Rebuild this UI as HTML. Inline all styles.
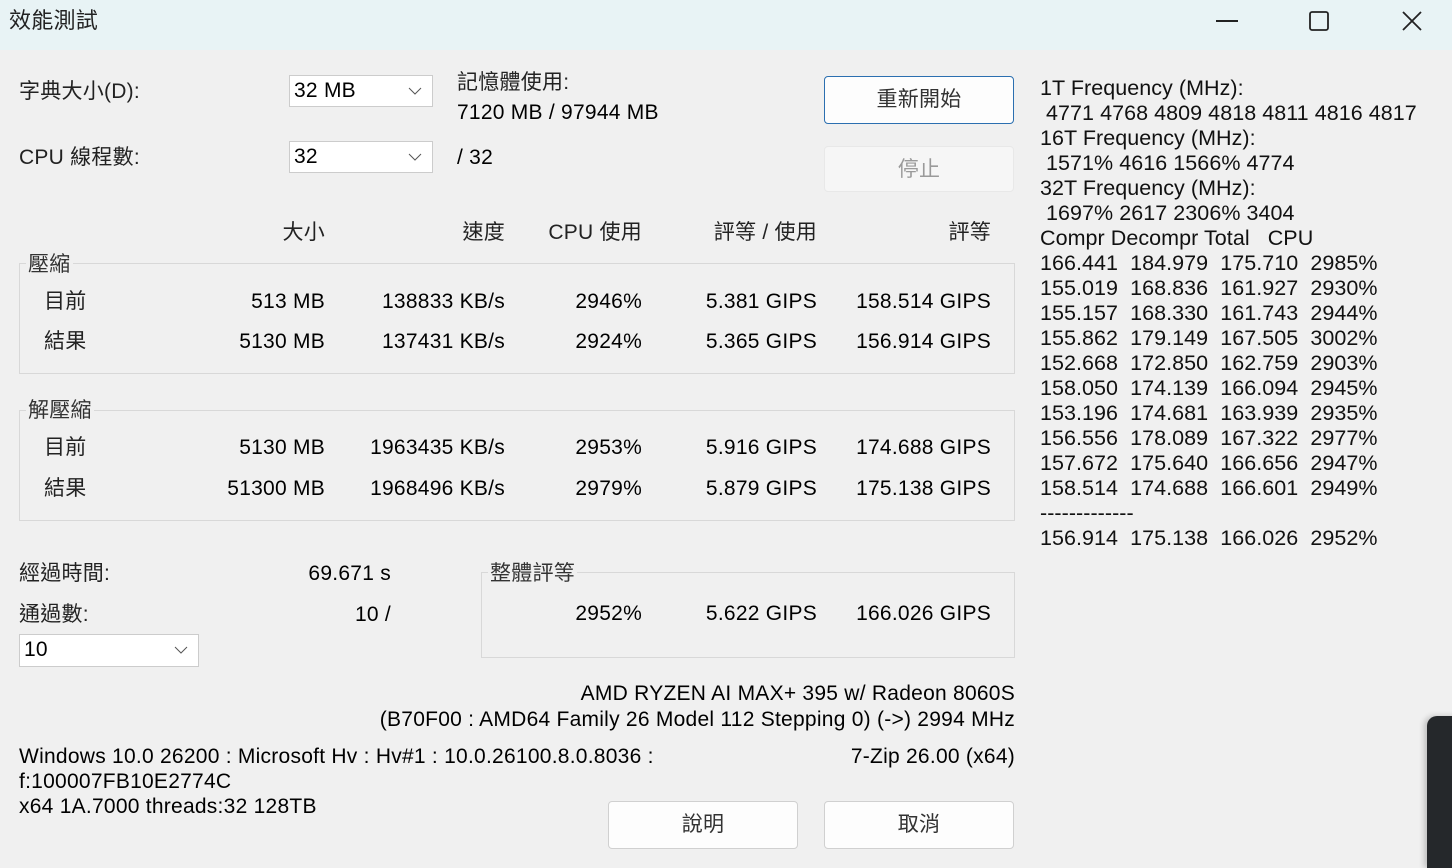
<!DOCTYPE html>
<html><head><meta charset="utf-8"><style>
*{margin:0;padding:0;box-sizing:border-box}
html,body{width:1452px;height:868px}
body{background:#f0f0f0;position:relative;overflow:hidden;font-family:"Liberation Sans","Noto Sans CJK TC",sans-serif;font-size:21px;letter-spacing:0.25px;color:#000}
.t{position:absolute;white-space:nowrap;line-height:24px}
.r{position:absolute;white-space:nowrap;line-height:24px;text-align:right}
.c{color:#222}
.title{position:absolute;left:0;top:0;width:1452px;height:50px;background:#e8f3f5}
.box{position:absolute;border:1px solid #d8d8d8}
.lg{position:absolute;background:#f0f0f0;line-height:24px;padding:0 2px;color:#333}
.combo{position:absolute;background:#fff;border:1px solid #ccc;height:32px;line-height:30px;padding-left:4px}
.combo svg{position:absolute;right:10px;top:11px}
.btn{position:absolute;background:#fdfdfd;border:1px solid #d0d0d0;border-radius:4px;text-align:center;color:#333}
.mono{font-size:21.5px;letter-spacing:0.05px;line-height:25px;color:#111}
</style></head><body>
<div class="title"></div>
<div class="t" style="left:9px;top:9px;font-size:22px;color:#222">效能測試</div>
<svg style="position:absolute;left:1216px;top:20px" width="22" height="2"><rect width="22" height="2" fill="#222"/></svg>
<svg style="position:absolute;left:1309px;top:11px" width="20" height="20"><rect x="1" y="1" width="18" height="18" rx="2" fill="none" stroke="#222" stroke-width="1.8"/></svg>
<svg style="position:absolute;left:1402px;top:11px" width="20" height="20"><path d="M1 1L19 19M19 1L1 19" stroke="#222" stroke-width="1.8"/></svg>

<div class="t c" style="left:19px;top:80px">字典大小(D):</div>
<div class="combo" style="left:289px;top:75px;width:144px">32 MB<svg width="14" height="8"><path d="M1 1L7 7L13 1" fill="none" stroke="#555"/></svg></div>
<div class="t c" style="left:457px;top:71px">記憶體使用:</div>
<div class="t" style="left:457px;top:101px">7120 MB / 97944 MB</div>
<div class="t c" style="left:19px;top:146px">CPU 線程數:</div>
<div class="combo" style="left:289px;top:141px;width:144px">32<svg width="14" height="8"><path d="M1 1L7 7L13 1" fill="none" stroke="#555"/></svg></div>
<div class="t" style="left:457px;top:146px">/ 32</div>

<div class="btn" style="left:824px;top:76px;width:190px;height:48px;line-height:46px;border:1px solid #2b6fb0">重新開始</div>
<div class="btn" style="left:824px;top:146px;width:190px;height:46px;line-height:46px;background:#f6f6f6;border-color:#e8e8e8;color:#9a9a9a">停止</div>

<div class="r c" style="right:1127px;top:221px">大小</div>
<div class="r c" style="right:947px;top:221px">速度</div>
<div class="r c" style="right:810px;top:221px">CPU 使用</div>
<div class="r c" style="right:635px;top:221px">評等 / 使用</div>
<div class="r c" style="right:461px;top:221px">評等</div>

<div class="box" style="left:19px;top:263px;width:996px;height:111px"></div>
<div class="lg" style="left:26px;top:253px">壓縮</div>
<div class="box" style="left:19px;top:410px;width:996px;height:111px"></div>
<div class="lg" style="left:26px;top:399px">解壓縮</div>

<div class="t c" style="left:44px;top:290px">目前</div>
<div class="r" style="right:1127px;top:290px">513 MB</div>
<div class="r" style="right:947px;top:290px">138833 KB/s</div>
<div class="r" style="right:810px;top:290px">2946%</div>
<div class="r" style="right:635px;top:290px">5.381 GIPS</div>
<div class="r" style="right:461px;top:290px">158.514 GIPS</div>
<div class="t c" style="left:44px;top:330px">結果</div>
<div class="r" style="right:1127px;top:330px">5130 MB</div>
<div class="r" style="right:947px;top:330px">137431 KB/s</div>
<div class="r" style="right:810px;top:330px">2924%</div>
<div class="r" style="right:635px;top:330px">5.365 GIPS</div>
<div class="r" style="right:461px;top:330px">156.914 GIPS</div>

<div class="t c" style="left:44px;top:436px">目前</div>
<div class="r" style="right:1127px;top:436px">5130 MB</div>
<div class="r" style="right:947px;top:436px">1963435 KB/s</div>
<div class="r" style="right:810px;top:436px">2953%</div>
<div class="r" style="right:635px;top:436px">5.916 GIPS</div>
<div class="r" style="right:461px;top:436px">174.688 GIPS</div>
<div class="t c" style="left:44px;top:477px">結果</div>
<div class="r" style="right:1127px;top:477px">51300 MB</div>
<div class="r" style="right:947px;top:477px">1968496 KB/s</div>
<div class="r" style="right:810px;top:477px">2979%</div>
<div class="r" style="right:635px;top:477px">5.879 GIPS</div>
<div class="r" style="right:461px;top:477px">175.138 GIPS</div>

<div class="t c" style="left:19px;top:562px">經過時間:</div>
<div class="r" style="right:1061px;top:562px">69.671 s</div>
<div class="t c" style="left:19px;top:603px">通過數:</div>
<div class="r" style="right:1061px;top:603px">10 /</div>
<div class="combo" style="left:19px;top:634px;width:180px;height:33px">10<svg width="14" height="8"><path d="M1 1L7 7L13 1" fill="none" stroke="#555"/></svg></div>

<div class="box" style="left:481px;top:572px;width:534px;height:86px"></div>
<div class="lg" style="left:488px;top:562px">整體評等</div>
<div class="r" style="right:810px;top:602px">2952%</div>
<div class="r" style="right:635px;top:602px">5.622 GIPS</div>
<div class="r" style="right:461px;top:602px">166.026 GIPS</div>

<div class="r" style="right:437px;top:682px">AMD RYZEN AI MAX+ 395 w/ Radeon 8060S</div>
<div class="r" style="right:437px;top:708px">(B70F00 : AMD64 Family 26 Model 112 Stepping 0) (-&gt;) 2994 MHz</div>
<div class="t" style="left:19px;top:745px">Windows 10.0 26200 : Microsoft Hv : Hv#1 : 10.0.26100.8.0.8036 :</div>
<div class="r" style="right:437px;top:745px">7-Zip 26.00 (x64)</div>
<div class="t" style="left:19px;top:770px">f:100007FB10E2774C</div>
<div class="t" style="left:19px;top:795px">x64 1A.7000 threads:32 128TB</div>

<div class="btn" style="left:608px;top:801px;width:190px;height:48px;line-height:46px">說明</div>
<div class="btn" style="left:824px;top:801px;width:190px;height:48px;line-height:46px">取消</div>

<div class="t mono" style="left:1040px;top:76px">1T Frequency (MHz):<br>&nbsp;4771 4768 4809 4818 4811 4816 4817<br>16T Frequency (MHz):<br>&nbsp;1571% 4616 1566% 4774<br>32T Frequency (MHz):<br>&nbsp;1697% 2617 2306% 3404<br>Compr Decompr Total &nbsp; CPU<br>166.441 &nbsp;184.979 &nbsp;175.710 &nbsp;2985%<br>155.019 &nbsp;168.836 &nbsp;161.927 &nbsp;2930%<br>155.157 &nbsp;168.330 &nbsp;161.743 &nbsp;2944%<br>155.862 &nbsp;179.149 &nbsp;167.505 &nbsp;3002%<br>152.668 &nbsp;172.850 &nbsp;162.759 &nbsp;2903%<br>158.050 &nbsp;174.139 &nbsp;166.094 &nbsp;2945%<br>153.196 &nbsp;174.681 &nbsp;163.939 &nbsp;2935%<br>156.556 &nbsp;178.089 &nbsp;167.322 &nbsp;2977%<br>157.672 &nbsp;175.640 &nbsp;166.656 &nbsp;2947%<br>158.514 &nbsp;174.688 &nbsp;166.601 &nbsp;2949%<br>-------------<br>156.914 &nbsp;175.138 &nbsp;166.026 &nbsp;2952%</div>

<div style="position:absolute;left:1427px;top:716px;width:40px;height:152px;background:#25282b;border-radius:10px 0 0 0;box-shadow:-3px 0 6px rgba(0,0,0,.2)"></div>
</body></html>
